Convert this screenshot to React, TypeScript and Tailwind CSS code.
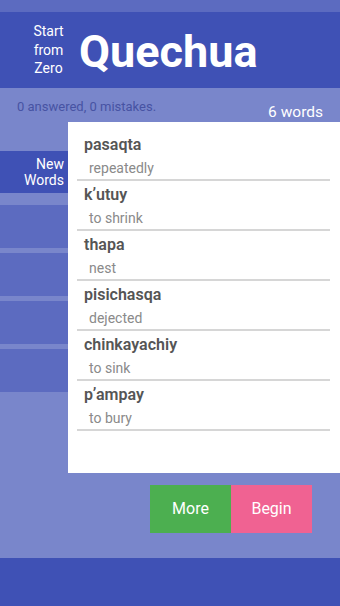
const words = [
  { word: 'pasaqta', meaning: 'repeatedly' },
  { word: 'k\u02bcutuy', meaning: 'to shrink' },
  { word: 'thapa', meaning: 'nest' },
  { word: 'pisichasqa', meaning: 'dejected' },
  { word: 'chinkayachiy', meaning: 'to sink' },
  { word: 'p\u02bcampay', meaning: 'to bury' },
]

export default function App() {
  return (
    <div className="w-[340px] h-[606px] flex flex-col overflow-hidden font-['Roboto',sans-serif]">
      {/* status bar */}
      <div className="h-[12px] bg-[#5c6bc0]" />

      {/* header */}
      <div className="h-[76px] bg-[#3f51b5] flex items-center pl-[30px]">
        <div className="w-[37px] text-[14px] leading-[18.5px] text-white text-center">
          Start<br />from<br />Zero
        </div>
        <div className="ml-[12px] text-[45px] font-bold text-white leading-none mt-[2px]">Quechua</div>
      </div>

      {/* body */}
      <div className="flex-1 bg-[#7986cb] flex flex-col">
        <div className="h-[34px] relative">
          <span className="absolute left-[17px] top-[9px] text-[13px] text-[#4753a3]">0 answered, 0 mistakes.</span>
          <span className="absolute right-[17px] top-[13px] text-[15.5px] text-white">6 words</span>
        </div>

        <div className="flex">
          <div className="w-[68px] pt-[29px] flex flex-col">
            <div className="h-[42px] bg-[#3f51b5] flex flex-col items-end justify-center pr-[4px] text-[14px] leading-[16px] text-white text-right">
              <span>New</span>
              <span>Words</span>
            </div>
            <div className="mt-[12px] flex flex-col gap-[5px]">
              <div className="h-[43px] bg-[#5c6bc0]" />
              <div className="h-[43px] bg-[#5c6bc0]" />
              <div className="h-[43px] bg-[#5c6bc0]" />
              <div className="h-[43px] bg-[#5c6bc0]" />
            </div>
          </div>

          <div className="flex-1 h-[351px] bg-white pt-[9px] pl-[9px] pr-[10px]">
            {words.map((w) => (
              <div key={w.word} className="pt-[4px] border-b-2 border-[#d6d6d6]">
                <div className="pl-[7px] text-[16px] leading-[20px] font-semibold text-[#555555]">{w.word}</div>
                <div className="mt-[2px] pl-[12px] text-[14px] leading-[22px] text-[#8a8a8a]">{w.meaning}</div>
              </div>
            ))}
          </div>
        </div>

        <div className="flex justify-end pr-[28px] mt-[12px]">
          <button className="w-[81px] h-[48px] bg-[#4caf50] text-white text-[16px]">More</button>
          <button className="w-[81px] h-[48px] bg-[#f06292] text-white text-[16px]">Begin</button>
        </div>
      </div>

      {/* bottom bar */}
      <div className="h-[48px] bg-[#3f51b5]" />
    </div>
  )
}
